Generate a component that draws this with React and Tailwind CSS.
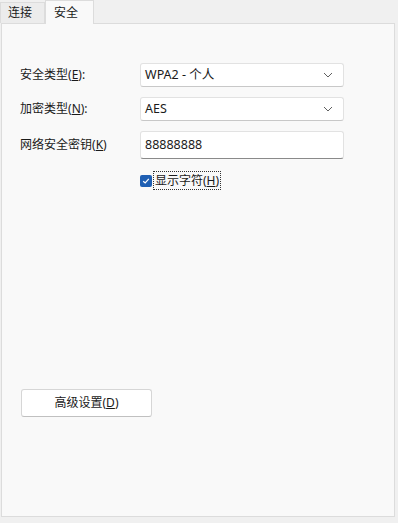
import React from 'react';

const font = { fontFamily: '"Noto Sans", "Noto Sans CJK SC", sans-serif' };

const Chevron = () => (
  <svg width="10" height="6" viewBox="0 0 10 6" className="text-[#606060]">
    <path d="M1 1 L5 5 L9 1" fill="none" stroke="currentColor" strokeWidth="1" />
  </svg>
);

const Select = ({ value }) => (
  <div className="w-[204px] h-[24px] flex items-center justify-between pl-[4px] pr-[10px] bg-white border border-[#e2e2e2] border-b-[#c8c8c8] rounded-[3px] text-[12.5px] text-[#1a1a1a]">
    <span>{value}</span>
    <Chevron />
  </div>
);

const Row = ({ label, hot, suffix, children }) => (
  <div className="flex items-center">
    <div className="w-[120px] text-[12px] text-[#1a1a1a]">
      {label}(<span className="underline">{hot}</span>){suffix}
    </div>
    {children}
  </div>
);

export default function App() {
  return (
    <div className="w-[398px] h-[523px] bg-[#f0f0f0] flex flex-col select-none" style={font}>
      {/* tabs */}
      <div className="flex items-end h-[23px] pl-0">
        <div className="h-[21px] w-[45px] flex items-center pl-[7px] text-[12px] text-[#1a1a1a] bg-[#ececec] border border-[#dcdcdc] border-b-0">
          连接
        </div>
        <div className="relative z-10 h-[24px] w-[49px] -mb-px flex items-center pl-[8px] text-[12px] text-[#1a1a1a] bg-[#f9f9f9] border border-[#dcdcdc] border-b-0">
          安全
        </div>
      </div>

      {/* panel */}
      <div className="w-[394px] h-[494px] ml-[1px] bg-[#f9f9f9] border border-[#dcdcdc] flex flex-col">
        <div className="pl-[18px] pt-[39px] flex flex-col gap-[10px]">
          <Row label="安全类型" hot="E" suffix=":">
            <Select value="WPA2 - 个人" />
          </Row>
          <Row label="加密类型" hot="N" suffix=":">
            <Select value="AES" />
          </Row>
          <Row label="网络安全密钥" hot="K">
            <div className="w-[204px] h-[28px] flex items-center pl-[4px] bg-white border border-[#e2e2e2] border-b-[#8a8a8a] rounded-[3px] text-[12.5px] text-[#1a1a1a]">
              88888888
            </div>
          </Row>
          <div className="flex items-center pl-[120px] mt-[2px]">
            <div className="w-[12px] h-[12px] rounded-[2px] bg-[#1f5fb3] flex items-center justify-center">
              <svg width="8" height="8" viewBox="0 0 8 8">
                <path d="M1.2 4.2 L3.2 6 L6.8 1.8" fill="none" stroke="white" strokeWidth="1.2" />
              </svg>
            </div>
            <div className="ml-[1px] px-[1px] py-[1px] border border-dotted border-[#333] text-[12px] text-[#1a1a1a] leading-[15px]">
              显示字符(<span className="underline">H</span>)
            </div>
          </div>
        </div>

        <div className="flex-1" />

        <div className="pl-[19px] mb-[99px]">
          <div className="w-[131px] h-[28px] flex items-center justify-center bg-white border border-[#d6d6d6] border-b-[#c0c0c0] rounded-[3px] text-[12px] text-[#1a1a1a]">
            高级设置(<span className="underline">D</span>)
          </div>
        </div>
      </div>
    </div>
  );
}
